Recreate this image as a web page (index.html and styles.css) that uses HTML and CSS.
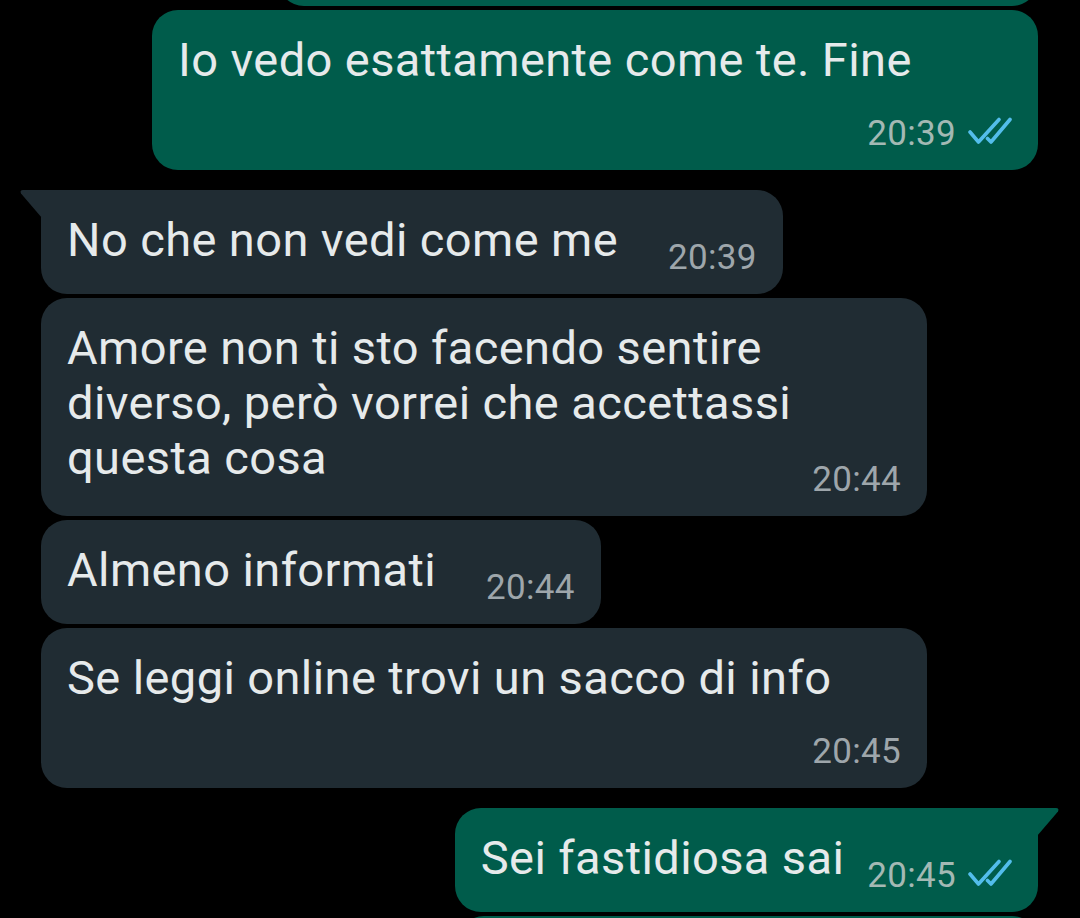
FILE: index.html
```html
<!DOCTYPE html>
<html lang="it">
<head>
  <meta charset="UTF-8">
  <title>Chat</title>
  <meta name="viewport" content="width=device-width, initial-scale=1" />
  <link rel="stylesheet" href="styles.css">
</head>
<body>

<div class="chat">

  <div class="row out">
    <div class="bubble out cut"></div>
  </div>

  <div class="row out">
    <div class="bubble out wide">
      <p class="text">Io vedo esattamente come te. Fine</p>
      <div class="meta newline">
        <span>20:39</span>
        <svg class="ticks" viewBox="0 0 44 28"><path d="M2 15 L10.5 25 L31 2.5"/><path d="M19.5 21.5 L23 25 L42 2.5"/></svg>
      </div>
    </div>
  </div>

  <div class="row in first">
    <div class="bubble in tail inline">
      <p class="text">No che non vedi come me</p>
      <div class="meta"><span>20:39</span></div>
    </div>
  </div>

  <div class="row in">
    <div class="bubble in wide">
      <p class="text">Amore non ti sto facendo sentire diverso, però vorrei che accettassi questa cosa</p>
      <div class="meta overlap"><span>20:44</span></div>
    </div>
  </div>

  <div class="row in">
    <div class="bubble in inline">
      <p class="text">Almeno informati</p>
      <div class="meta"><span>20:44</span></div>
    </div>
  </div>

  <div class="row in">
    <div class="bubble in wide">
      <p class="text">Se leggi online trovi un sacco di info</p>
      <div class="meta newline"><span>20:45</span></div>
    </div>
  </div>

  <div class="row out first">
    <div class="bubble out tail inline">
      <p class="text">Sei fastidiosa sai</p>
      <div class="meta">
        <span>20:45</span>
        <svg class="ticks" viewBox="0 0 44 28"><path d="M2 15 L10.5 25 L31 2.5"/><path d="M19.5 21.5 L23 25 L42 2.5"/></svg>
      </div>
    </div>
  </div>

  <div class="row out">
    <div class="bubble out next"></div>
  </div>

</div>

</body>
</html>
```

FILE: styles.css
```css
html, body {
  height: 100%;
}
body {
  margin: 0;
  background: #000;
  color: #e6eaeb;
  font-family: Roboto, "Noto Sans", sans-serif;
  overflow: hidden;
}
.chat {
  display: flex;
  flex-direction: column;
  gap: 4px;
  padding: 0 42px 0 41px;
}
.row {
  display: flex;
}
.row.out {
  justify-content: flex-end;
}
.row.first {
  margin-top: 16px;
}
.bubble {
  position: relative;
  padding: 22px 26px 16px;
  border-radius: 26px;
  box-sizing: border-box;
}
.bubble.in {
  background: #202c33;
}
.bubble.out {
  background: #005c4b;
}
.bubble.wide {
  width: 886px;
  display: flex;
  flex-direction: column;
}
.bubble.inline {
  display: flex;
  align-items: flex-start;
}
.bubble.cut {
  width: 760px;
  height: 104px;
  margin-top: -98px;
}
.bubble.next {
  width: 580px;
  height: 104px;
}

/* code della bolla */
.bubble.tail.in {
  border-top-left-radius: 0;
}
.bubble.tail.out {
  border-top-right-radius: 0;
}
.bubble.tail::before {
  content: "";
  position: absolute;
  top: 0;
  width: 22px;
  height: 28px;
  background: inherit;
}
.bubble.tail.in::before {
  left: -21px;
  clip-path: path('M3 0 H22 V28 L1 3.5 Q-0.5 0 3 0 Z');
}
.bubble.tail.out::before {
  right: -21px;
  clip-path: path('M19 0 H0 V28 L21 3.5 Q22.5 0 19 0 Z');
}

.text {
  margin: 0;
  font-size: 47px;
  line-height: 55px;
  letter-spacing: 0.4px;
}
.meta {
  display: flex;
  align-items: flex-start;
  font-size: 35px;
  line-height: 40px;
  letter-spacing: 0.3px;
  white-space: nowrap;
}
.in .meta {
  color: #9ea6ab;
}
.out .meta {
  color: #a3b9b4;
}
.inline .meta {
  margin-top: 26px;
  margin-left: 50px;
}
.out.inline .meta {
  margin-left: 23px;
}
.meta.newline {
  align-self: flex-end;
  margin-top: 27px;
}
.meta.overlap {
  align-self: flex-end;
  margin-top: -25px;
}
.ticks {
  width: 44px;
  height: 28px;
  margin: 3px 0 0 12px;
  fill: none;
  stroke: #53bdeb;
  stroke-width: 3.6;
  stroke-linecap: round;
  stroke-linejoin: round;
}
```
